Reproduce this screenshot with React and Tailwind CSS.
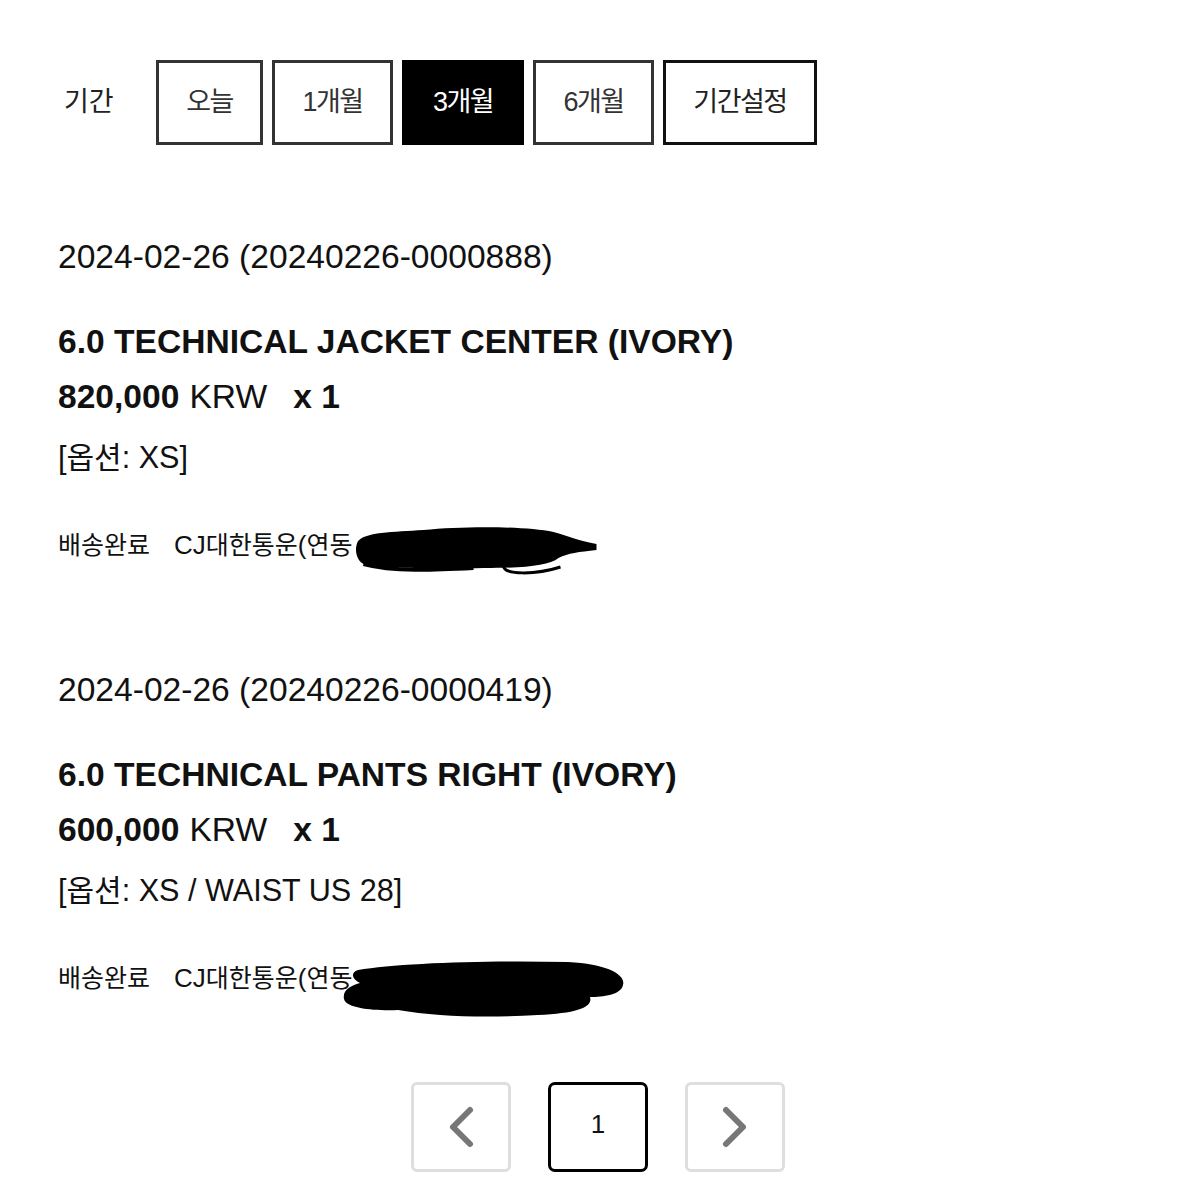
import React from "react";

const periods = [
  { label: "오늘", w: "w-[107px]" },
  { label: "1개월", w: "w-[121px]" },
  { label: "3개월", w: "w-[122px]", active: true },
  { label: "6개월", w: "w-[121px]" },
  { label: "기간설정", w: "w-[154px]", strong: true },
];

const orders = [
  {
    date: "2024-02-26",
    no: "20240226-0000888",
    name: "6.0 TECHNICAL JACKET CENTER (IVORY)",
    price: "820,000",
    qty: 1,
    option: "XS",
    blob: 1,
  },
  {
    date: "2024-02-26",
    no: "20240226-0000419",
    name: "6.0 TECHNICAL PANTS RIGHT (IVORY)",
    price: "600,000",
    qty: 1,
    option: "XS / WAIST US 28",
    blob: 2,
  },
];

// 가려진 송장번호 (낙서)
function Scribble({ type }) {
  if (type === 1) {
    return (
      <svg className="absolute left-[293px] top-[-3px]" width="255" height="56" viewBox="0 0 250 56">
        <path
          d="M4,20 C10,10 40,10 70,8 C110,4 170,4 200,10 C215,14 222,18 243,22 L243,28 C225,30 215,31 205,36 C195,44 170,46 130,46 C90,47 40,46 15,44 C4,42 0,30 4,20 Z"
          fill="#000"
        />
        <path d="M10,42 C40,50 80,48 120,46" stroke="#000" strokeWidth="4" fill="none" />
        <path d="M150,44 C150,53 182,53 207,45" stroke="#000" strokeWidth="3" fill="none" />
      </svg>
    );
  }
  return (
    <svg className="absolute left-[278px] top-[-3px]" width="304" height="70" viewBox="0 0 300 70">
      <path
        d="M20,15 C60,8 150,5 230,7 C270,9 288,20 285,30 C283,40 265,42 252,42 C255,52 240,58 200,60 C150,63 100,62 60,55 C40,56 8,54 6,44 C4,34 15,30 22,28 C14,24 12,18 20,15 Z"
        fill="#000"
      />
    </svg>
  );
}

function Order({ order }) {
  return (
    <div className="text-[#111]">
      <div className="h-[40px] leading-[40px] text-[33.6px]">
        {order.date} ({order.no})
      </div>
      <div className="mt-[45px] h-[40px] leading-[40px] text-[33.6px] font-bold">{order.name}</div>
      <div className="mt-[15px] h-[40px] leading-[40px] text-[33.6px] flex">
        <span className="font-bold">{order.price}</span>
        <span className="ml-[10px]">KRW</span>
        <span className="ml-[26px] font-bold">x {order.qty}</span>
      </div>
      <div className="mt-[20px] h-[40px] leading-[40px] text-[30.6px]">
        [<span className="text-[30px]">옵션</span>: {order.option}]
      </div>
      <div className="relative mt-[48px] h-[40px] leading-[40px] flex items-center">
        <span className="text-[25px]">배송완료</span>
        <span className="ml-[24px] text-[26px]">
          CJ<span className="text-[25px]">대한통운</span>(<span className="text-[25px]">연동</span>
        </span>
        <Scribble type={order.blob} />
      </div>
    </div>
  );
}

export default function App() {
  return (
    <div
      className="w-[1200px] min-h-[1200px] bg-white pt-[60px]"
      style={{ fontFamily: '"Liberation Sans", "Noto Sans CJK KR", sans-serif' }}
    >
      <div className="pl-[58px]">
        <div className="flex items-center">
          <div className="w-[98px] pl-[6px] text-[27px] text-[#222]">기간</div>
          <div className="flex gap-[9px]">
            {periods.map((p) => (
              <div
                key={p.label}
                className={
                  p.active
                    ? `${p.w} h-[85px] flex items-center justify-center bg-black border-[3px] border-black text-white text-[27px] tracking-[-1.5px]`
                    : p.strong
                    ? `${p.w} h-[85px] flex items-center justify-center border-[3px] border-[#111] text-[#222] text-[27px] tracking-[-1.5px]`
                    : `${p.w} h-[85px] flex items-center justify-center border-[3px] border-[#333] text-[#333] text-[27px] tracking-[-1.5px]`
                }
              >
                {p.label}
              </div>
            ))}
          </div>
        </div>

        <div className="mt-[92px]">
          <Order order={orders[0]} />
        </div>
        <div className="mt-[105px]">
          <Order order={orders[1]} />
        </div>
      </div>

      <div className="mt-[84px] flex justify-center gap-[37px] pr-[4px]">
        <div className="w-[100px] h-[90px] rounded-[6px] border-[3px] border-[#dedede] flex items-center justify-center">
          <svg width="30" height="44" viewBox="0 0 30 44">
            <path d="M24,5 L7,22 L24,39" stroke="#777" strokeWidth="6" strokeLinecap="round" strokeLinejoin="round" fill="none" />
          </svg>
        </div>
        <div className="w-[100px] h-[90px] rounded-[7px] border-[3px] border-black flex items-center justify-center pb-[6px] text-[26px] text-[#111]">
          1
        </div>
        <div className="w-[100px] h-[90px] rounded-[6px] border-[3px] border-[#dedede] flex items-center justify-center">
          <svg width="30" height="44" viewBox="0 0 30 44">
            <path d="M6,5 L23,22 L6,39" stroke="#777" strokeWidth="6" strokeLinecap="round" strokeLinejoin="round" fill="none" />
          </svg>
        </div>
      </div>
    </div>
  );
}
